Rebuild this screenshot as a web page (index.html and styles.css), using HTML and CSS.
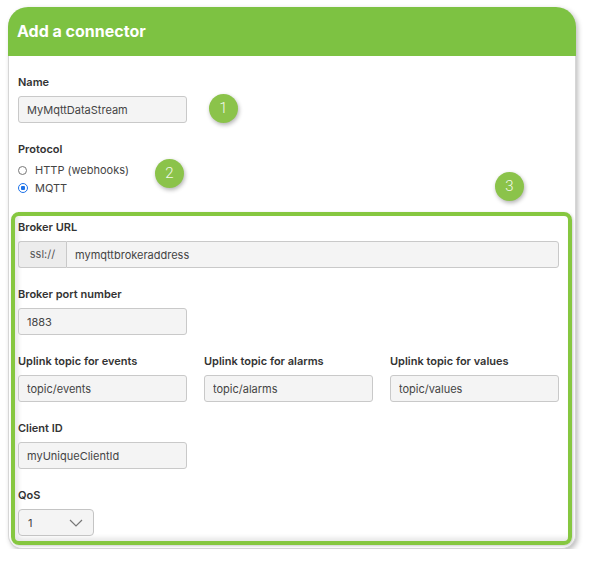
FILE: index.html
```html
<!DOCTYPE html>
<html lang="en">
<head>
    <meta charset="UTF-8">
    <title>Add a connector</title>
    <link rel="stylesheet" href="styles.css">
</head>
<body>
    <div class="card">
        <div class="card-header">Add a connector</div>
        <div class="card-body">
            <div class="field">
                <label class="field-label">Name</label>
                <input class="text-input short" type="text" value="MyMqttDataStream">
            </div>
            <div class="field">
                <label class="field-label protocol-label">Protocol</label>
                <label class="radio-row"><span class="radio"></span>HTTP (webhooks)</label>
                <label class="radio-row"><span class="radio checked"></span>MQTT</label>
            </div>

            <div class="mqtt-box">
                <div class="field">
                    <label class="field-label">Broker URL</label>
                    <div class="input-group">
                        <span class="addon">ssl://</span>
                        <input class="text-input grow" type="text" value="mymqttbrokeraddress">
                    </div>
                </div>
                <div class="field">
                    <label class="field-label">Broker port number</label>
                    <input class="text-input short" type="text" value="1883">
                </div>
                <div class="field topics">
                    <div>
                        <label class="field-label">Uplink topic for events</label>
                        <input class="text-input" type="text" value="topic/events">
                    </div>
                    <div>
                        <label class="field-label">Uplink topic for alarms</label>
                        <input class="text-input" type="text" value="topic/alarms">
                    </div>
                    <div>
                        <label class="field-label">Uplink topic for values</label>
                        <input class="text-input" type="text" value="topic/values">
                    </div>
                </div>
                <div class="field">
                    <label class="field-label">Client ID</label>
                    <input class="text-input short" type="text" value="myUniqueClientId">
                </div>
                <div class="field last">
                    <label class="field-label">QoS</label>
                    <div class="select">
                        <span>1</span>
                        <svg width="14" height="8" viewBox="0 0 14 8"><path d="M1 1 L7 7 L13 1" fill="none" stroke="#777" stroke-width="1.2"/></svg>
                    </div>
                </div>
            </div>
        </div>

        <!-- numbered callouts -->
        <div class="badge badge-1">1</div>
        <div class="badge badge-2">2</div>
        <div class="badge badge-3">3</div>
    </div>
</body>
</html>
```

FILE: styles.css
```css
body {
    margin: 0;
    padding: 7px 0 0 8px;
    background: #fff;
    font-family: 'Inter', 'Liberation Sans', sans-serif;
    color: #333;
}
.card {
    position: relative;
    width: 566px;
    border: 1px solid #d6d6d6;
    border-top: none;
    border-radius: 20px 20px 14px 14px;
    box-shadow: 2px 2px 5px rgba(0, 0, 0, 0.25);
    background: #fff;
}
.card-header {
    height: 49px;
    line-height: 48px;
    margin: 0 -1px;
    padding-left: 9px;
    background-color: #7dc242;
    border-radius: 20px 20px 0 0;
    color: #fff;
    font-size: 16px;
    font-weight: bold;
}
.card-body {
    padding: 19px 10px 3px 9px;
}
.field {
    margin-bottom: 19px;
}
.field.last {
    margin-bottom: 0;
}
.field-label {
    display: block;
    height: 14px;
    line-height: 14px;
    margin-bottom: 7px;
    font-size: 11px;
    font-weight: 600;
    color: #333;
}
.protocol-label {
    margin-bottom: 5px;
}
.text-input {
    display: block;
    box-sizing: border-box;
    width: 169px;
    height: 27px;
    margin: 0;
    padding: 0 8px;
    border: 1px solid #c9c9c9;
    border-radius: 3px;
    background: #f4f4f4;
    font-family: inherit;
    font-size: 11px;
    color: #444;
    outline: none;
}
.radio-row {
    display: flex;
    align-items: center;
    height: 18px;
    font-size: 11px;
    color: #444;
}
.radio {
    box-sizing: border-box;
    width: 9px;
    height: 9px;
    margin: 0 8px 0 0;
    border: 1px solid #777;
    border-radius: 50%;
    background: #fff;
}
.radio.checked {
    width: 10px;
    height: 10px;
    margin-right: 7px;
    border: 1.5px solid #1d72e8;
    background: radial-gradient(circle, #1d72e8 0 2px, #fff 2.5px);
}
.mqtt-box {
    margin: -4px -7px 0 -7px;
    padding: 4px 9px 5px 3px;
    border: 4px solid #86c740;
    border-radius: 8px;
    box-shadow: inset 3px -3px 5px rgba(0, 0, 0, 0.1), 1px 1px 3px rgba(0, 0, 0, 0.2);
}
.input-group {
    display: flex;
}
.addon {
    box-sizing: border-box;
    width: 48px;
    height: 27px;
    line-height: 25px;
    text-align: center;
    border: 1px solid #c9c9c9;
    border-right: none;
    border-radius: 3px 0 0 3px;
    background: #ececec;
    font-size: 11px;
    color: #555;
}
.text-input.grow {
    flex: 1;
    border-radius: 0 3px 3px 0;
}
.topics {
    display: grid;
    grid-template-columns: repeat(3, 169px);
    column-gap: 17px;
}
.select {
    box-sizing: border-box;
    display: flex;
    align-items: center;
    justify-content: space-between;
    width: 76px;
    height: 27px;
    padding: 0 10px 0 9px;
    border: 1px solid #c4c4c4;
    border-radius: 4px;
    background: #f4f4f4;
    font-size: 11px;
    color: #444;
}
.badge {
    position: absolute;
    width: 29px;
    height: 29px;
    line-height: 29px;
    border-radius: 50%;
    background: #8bc34a;
    box-shadow: 1px 2px 4px rgba(0, 0, 0, 0.3);
    color: #f4f9ee;
    text-align: center;
    font-family: 'Roboto', sans-serif;
    font-weight: 300;
    font-size: 15px;
}
.badge-1 {
    left: 200px;
    top: 87px;
}
.badge-2 {
    left: 146px;
    top: 152px;
}
.badge-3 {
    left: 486px;
    top: 165px;
}
```
